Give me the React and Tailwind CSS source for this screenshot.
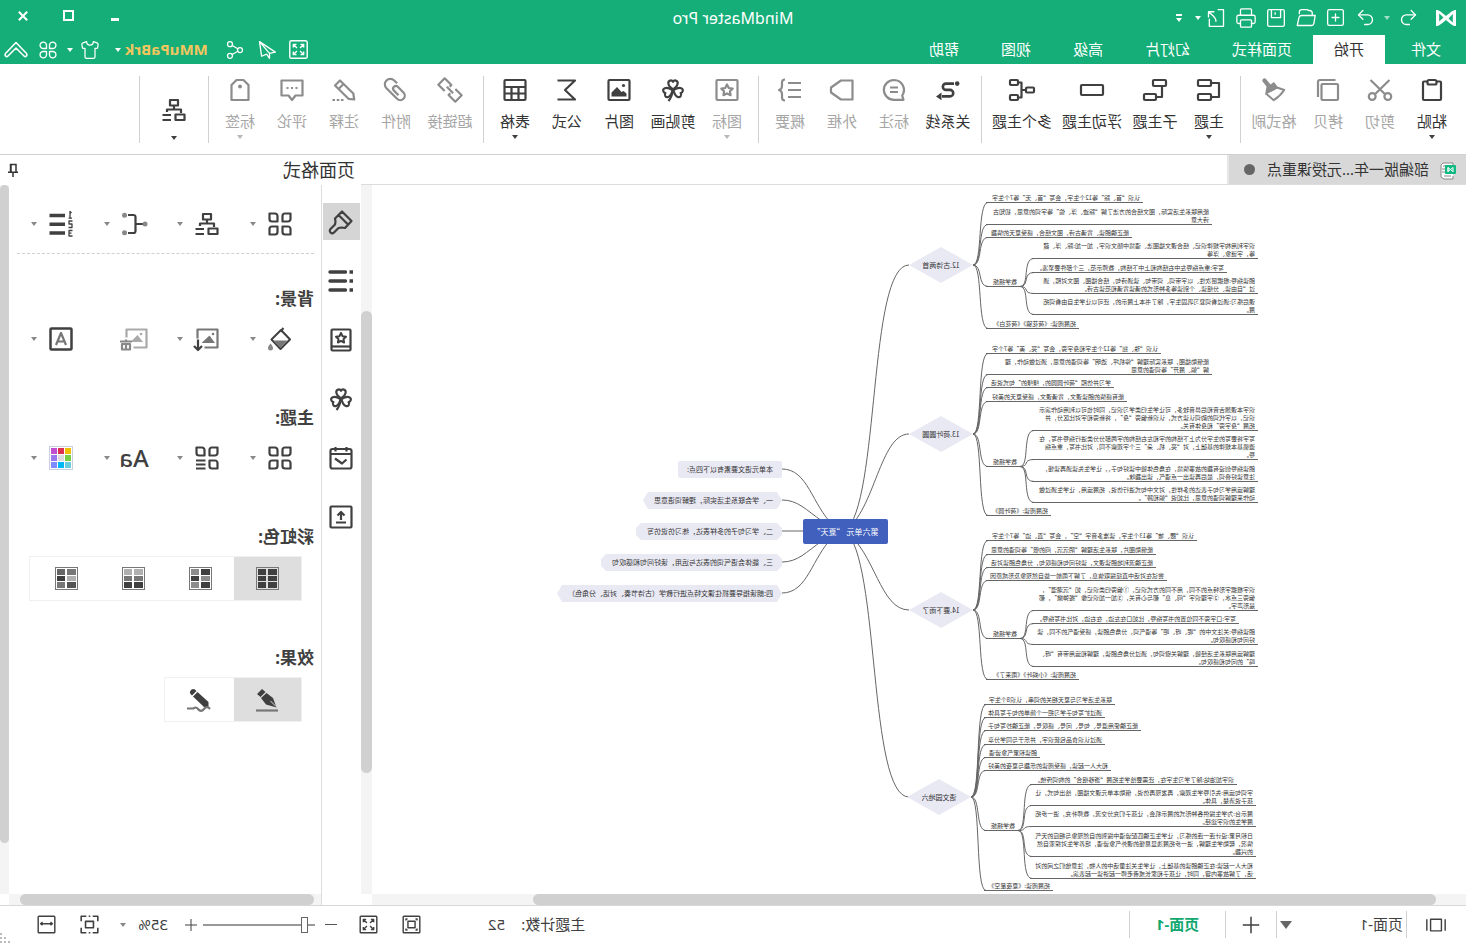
import { Printer, Redo2, Share2, Shirt, SquarePlus, Undo2 } from "lucide-react";

const TOPICS = [
  {
    title: "12.古诗两首",
    x: 493,
    y: 80,
    leaves: [
      { x: 323, y: 17, text: "认识“首、踪”等12个生字，会写“首、无”等7个生字" },
      { x: 254, y: 39, text: "能用联系生活实际，图文结合的方法了解“踪迹、浮、偷”等字词的意思，初知古\n诗大意" },
      { x: 334, y: 52, text: "能正确朗读、背诵古诗，图文结合，感受夏天的情趣" },
      { x: 387, y: 143, text: "拓展阅读:《荷花镇》《荷花白》" },
    ],
    measures: {
      y: 101,
      leaves: [
        { x: 208, y: 73, text: "识字利用构字规律识记、结合课文插图法、语境中随文识字，加一加:踪、浮、藏\n等，字谜象、浮等" },
        { x: 239, y: 87, text: "写字:重点指导左中右结构和上中下结构，教师示范，三个部件要紧凑。" },
        { x: 208, y: 108, text: "朗读指导:根据层次性、以字带词、词带句、读通诗句，结合插图、图文对照，通\n过“自由读、分组读、个别读等多种形式的诵读背诵和范读古诗。" },
        { x: 208, y: 129, text: "课后练习:通过看词复习巩固生字，除了书本上展示的，还可以让学生自由看词拓\n展。" },
      ],
    },
  },
  {
    title: "13.荷叶圆圆",
    x: 493,
    y: 249,
    leaves: [
      { x: 305, y: 168, text: "认识“珠、摇”等12个生字和身字旁，会写“亮、美”等7个字" },
      { x: 254, y: 189, text: "能借助插图，联系实际理解“停机坪、透明”等词语的意思，通过做动作，理\n解“躺、展开”等词语的意思" },
      { x: 352, y: 202, text: "学习并仿照“荷叶圆圆的，绿绿的”句式说话" },
      { x: 339, y: 216, text: "能有感情的朗读课文，背诵课文，感受夏天的美好" },
      { x: 415, y: 330, text: "拓展阅读:《荷叶圆》" },
    ],
    measures: {
      y: 281,
      leaves: [
        { x: 208, y: 245, text: "识字本课翘舌音和后鼻音较多，可让学生归类学习识记，同时也可以利用动作演示\n识记，以字代词的韵词认读方式，认识新偏旁“身”，将新旁和字对比区分，并\n拓展“身字旁”和身体有关。" },
        { x: 208, y: 274, text: "写字将要写的生字分为上下结构的字和左右结构的字两部分分类进行指导书写，在\n遵循基本规律的基础上，对“亮、机、朵”三个字观察不同，对比书写，重点指\n导。" },
        { x: 208, y: 296, text: "朗读指导创设有趣的故事情境，在角色体验中读好句子，，让学生先读通再读懂，\n注意读好叠词，最后再读出一点语气，读出趣味。" },
        { x: 208, y: 317, text: "理解运用学习句子表达的多样性，对文中句式进行仿说，拓展运用，让学生通过做\n动作来理解词语的意思，比如说“躺和蹲”。" },
      ],
    },
  },
  {
    title: "14.要下雨了",
    x: 493,
    y: 425,
    leaves: [
      { x: 269, y: 355, text: "认识“腰、坡”等13个生字，读准多音字“空”，会写“直、边”等7个生字" },
      { x: 310, y: 369, text: "能借助图片，联系生活理解“阴沉沉，闷的很”等词语的意思" },
      { x: 310, y: 382, text: "能正确流利地朗读课文，读好问句和感叹句，分角色朗读对话" },
      { x: 299, y: 395, text: "尝试在对话中直接提取信息，了解下雨前一些自然现象及形成原因" },
      { x: 387, y: 494, text: "拓展阅读:《小蚂叶》《雨来了》" },
    ],
    measures: {
      y: 453,
      leaves: [
        { x: 208, y: 425, text: "识字根据字形特点的不同，用不同的方式识记，①偏旁归类识记，如“沉潮湿”，\n偏旁三点水，②字理识字“闷、息”都与心有关，③加一加识记像“搬弹嫩”，都\n是形声字。" },
        { x: 227, y: 438, text: "写字:口字旁不同位置的书写指导，比如口在左边，在右边，对比书写指导。" },
        { x: 208, y: 459, text: "朗读指导:关注文中的“呢、呀、吧”等语气词，分角色朗读，感受语气的不同，读\n好问句和感叹句。" },
        { x: 208, y: 481, text: "理解运用联系生活经验，理解关键词句，通过分角色朗读，理解和运用带有“呀、\n吗”的问句和感叹句。" },
      ],
    },
  },
  {
    title: "语文园地六",
    x: 495,
    y: 612,
    leaves: [
      { x: 351, y: 519, text: "联系生活学习与夏天相关的词串，认识8个生字" },
      { x: 361, y: 532, text: "通过扩写句子学习把一个简单的句子写具体" },
      { x: 325, y: 545, text: "能正确使用逗号、句号、问号、感叹号，能正确抄写句子" },
      { x: 361, y: 559, text: "通过认识食品包装识字，并乐于与同学分享" },
      { x: 426, y: 572, text: "朗读积累气象谚语" },
      { x: 355, y: 585, text: "和大人一起读，感受阅读的乐趣与夏夜的美好" },
      { x: 413, y: 705, text: "拓展阅读:《夏夜星空》" },
    ],
    measures: {
      y: 645,
      leaves: [
        { x: 229, y: 599, text: "识字加油站:除了学习生字在，还需要给学生拓展“游移组合”的构词传统。" },
        { x: 210, y: 620, text: "字词句运用:先引导学生观察，再发现再仿说，借助本单元课文插图，给出句式，让\n孩子说清楚，具体。" },
        { x: 210, y: 641, text: "展示台:为学生提供各种形式的展示机会，让孩子们充分交流，教师补充，进一步拓\n展学生的识字途径。" },
        { x: 210, y: 671, text: "日积月累:设计连一连的练习，让学生正确匹配谚语中提到的自然现象与相应的天气\n情况，帮助学生理解，进一步拓展浅显易懂的课外气象谚语，培养学生对探索自然\n的兴趣。" },
        { x: 210, y: 693, text: "和大人一起读:在正确朗读的基础上，让学生关注童话中的人物，注意他们之间的对\n话，了解故事内容，同时，让孩子和家长或者老师一起讲读一起表演。" },
      ],
    },
  },
];

const HEXAGON = "pr-[11px] [clip-path:polygon(5px_0,calc(100%-5px)_0,100%_50%,calc(100%-5px)_100%,5px_100%,0_50%)]";
const OCTAGON = "pr-[11px] [clip-path:polygon(5px_0,calc(100%-5px)_0,100%_5px,100%_12px,calc(100%-5px)_100%,5px_100%,0_12px,0_5px)]";

const POINTS = [
  { y: 276, shape: "pr-[9px] rounded-xs", text: "本单元语文要素有以下四点:" },
  { y: 307, shape: HEXAGON, text: "一、学会联系生活实际，理解词语意思" },
  { y: 338, shape: OCTAGON, text: "二、学习句子的多样表达，练习仿说仿写" },
  { y: 369, shape: OCTAGON, text: "三、能体会语气词的表达与运用，读好问句和感叹句" },
  { y: 400, shape: HEXAGON, text: "四:朗读指导要抓住课文特点进行教学（古诗节奏、对话、分角色）" },
];

const TRUNKS = [
  "M621 346C586 320 598 80 557 80",
  "M621 346C591 325 586 249 557 249",
  "M621 346C591 367 586 425 557 425",
  "M621 346C586 372 598 612 557 612",
  "M633 340C654 320 658 284 684 284",
  "M644 336C660 325 668 315 684 315",
  "M621 346H684",
  "M644 356C660 367 668 377 684 377",
  "M633 352C654 372 658 408 684 408",
];

function Icon({ children, className = "size-6", strokeWidth = 2.2 }) {
  return (
    <svg
      viewBox="0 0 24 24"
      className={`shrink-0 overflow-visible ${className}`}
      fill="none"
      stroke="currentColor"
      strokeWidth={strokeWidth}
      strokeLinejoin="round"
      aria-hidden="true"
    >
      {children}
    </svg>
  );
}

const HEART = "M12 11.5C8.5 9 7.3 7 7.3 5A2.5 2.5 0 0 1 12 3.8 2.5 2.5 0 0 1 16.7 5C16.7 7 15.5 9 12 11.5Z";
const STAR = "M12 6.5l1.8 3.5 3.9.6-2.8 2.7.7 3.9-3.6-1.8-3.6 1.8.7-3.9-2.8-2.7 3.9-.6z";

const ICONS = {
  paste: <><rect x="3" y="3.5" width="18" height="18.5" rx="1" /><rect x="7.5" y="2" width="9" height="4.5" rx="1.5" className="fill-white" /></>,
  cut: <><circle cx="4.2" cy="18.5" r="3.4" /><circle cx="19.8" cy="18.5" r="3.4" /><path d="M2.5 2l14.6 14.2M21.5 2L6.9 16.2" /></>,
  copy: <><rect x="2" y="6" width="16.5" height="16" rx="1" /><path d="M4.5 2H20a2 2 0 0 1 2 2v15" /></>,
  brush: <><path d="M12 4l3.5 2.5L20 1a2 2 0 0 1 3 3l-3.5 4.5 1.5 8.5L7.5 10z" fill="currentColor" stroke="none" /><path d="M9 9.500L1.800 12c3 4.500 6 7.500 10.500 10.200l7.200-6.200" strokeWidth="2" /></>,
  topic: <><rect x="10" y="2" width="13" height="6" rx="1" /><rect x="10" y="16" width="13" height="6" rx="1" /><path d="M10 5H2v14h8" /></>,
  subtopic: <><rect x="1" y="2" width="13" height="6" rx="1" /><rect x="11" y="16" width="12" height="6" rx="1" /><path d="M5 8v11h6" /></>,
  floating: <rect x="1" y="7" width="22" height="10" rx="1" />,
  multi: <><rect x="16" y="2" width="8" height="5" rx="1" /><rect x="16" y="17" width="8" height="5" rx="1" /><rect x="0" y="9.500" width="8" height="5" rx="1" /><path d="M16 4.500h-3.500v15H16M8 12h4.500" /></>,
  relation: <><circle cx="2.800" cy="5.600" r="2.300" fill="currentColor" stroke="none" /><path d="M6 5.600h8a3.100 3.100 0 0 1 0 6.300h-4a3.200 3.200 0 0 0 0 6.500h8" strokeWidth="2.600" /><path d="M18.500 14.500l5.500 3.900-5.500 3.800z" fill="currentColor" stroke="none" /></>,
  callout: <><path d="M12 2a10 9.800 0 1 1 0 19.800H2.500l1.300-4.200A10 10 0 0 1 12 2Z" /><path d="M8 9.500h8M8 14h8" /></>,
  boundary: <path d="M1.500 2.500H13L23 9.500v5l-10 7H1.500z" />,
  summary: <><path d="M1 5h13M1 12h13M1 19h13" /><path d="M17 1.500c2.300 0 3 1 3 3V8c0 2.500 1 3.500 3 4-2 .5-3 1.500-3 4v3.500c0 2-.7 3-3 3" /></>,
  mark: <><rect x="1.500" y="2" width="21" height="20" rx="1" /><path d={STAR} /></>,
  clover: <><path d={HEART} /><path d={HEART} transform="rotate(112 12 12)" /><path d={HEART} transform="rotate(-112 12 12)" /><path d="M12 11.500c.5 4.500 2 8.500 4.500 11.500" /></>,
  picture: <><rect x="1.500" y="2" width="21" height="20" rx="1" /><circle cx="7.500" cy="7.500" r="1.600" fill="currentColor" stroke="none" /><path d="M4.500 18.500v-3l3-2.500 2 1 4.500-5 5.500 5.500v4z" fill="currentColor" stroke="none" /></>,
  formula: <path d="M21.500 2.500H4L14 12 4 21.500h17.500" />,
  table: <><rect x="1.500" y="2" width="21" height="20" rx="1" /><path d="M1.500 9h21M1.500 15.500h21M8.500 9v13M15.500 9v13" /></>,
  link: <g transform="rotate(-45 12 12)"><path d="M9 7.500H0v9h9.500V14M15 16.500h9v-9h-9.500V10M7.500 12h9" /></g>,
  clip: <g transform="rotate(45 12 12)"><path d="M6.500 8V4a5.500 5.500 0 0 1 11 0v15a4.500 4.500 0 0 1-9 0V11a2.700 2.700 0 0 1 5.400 0v6.500" /></g>,
  note: <><path d="M1.800 21.500l.9-6L16 2.500l5 5L7.500 20.800zM12.500 6l5 5" /><path d="M12.500 22h2.500M16.700 22h2.500M21 22h2.500" /></>,
  comment: <><path d="M1.500 2.500h21v15h-7L12 22l-3.500-4.500h-7z" /><path d="M6.500 10h2M11 10h2M15.500 10h2" /></>,
  tag: <><path d="M8.500 2h7L20.500 7v15h-17V7z" /><circle cx="12" cy="8.500" r="2" fill="currentColor" stroke="none" /></>,
  tree: <><rect x="8" y="2" width="8" height="5.500" /><path d="M12 7.500V11M5 15v-3.500h14V14M15 17h8.500M15 22h8.500" /><rect x="1.500" y="16.500" width="9" height="5.500" /></>,
  leaves: <path d="M1.500 1.500H7A2.500 2.500 0 0 1 9.500 4v5.500H4A2.500 2.500 0 0 1 1.500 7zM22.500 1.500H17A2.500 2.500 0 0 0 14.500 4v5.500H20A2.500 2.500 0 0 0 22.500 7zM1.500 22.500H7A2.500 2.500 0 0 0 9.500 20v-5.500H4A2.500 2.500 0 0 0 1.500 17zM22.500 22.500H17a2.500 2.500 0 0 1-2.500-2.500v-5.500H20a2.500 2.500 0 0 1 2.500 2.500z" />,
  leafList: <path d="M1.500 1.500H7A2.500 2.500 0 0 1 9.500 4v5.500H4A2.500 2.500 0 0 1 1.500 7zM22.500 1.500H17A2.500 2.500 0 0 0 14.500 4v5.500H20A2.500 2.500 0 0 0 22.500 7zM1.500 22.500H7A2.500 2.500 0 0 0 9.500 20v-5.500H4A2.500 2.500 0 0 0 1.500 17zM13.500 14.500H23M13.500 18.500H23M13.500 22.500H23" />,
  bracket: <><path d="M2 12h8M18 3h-5.500a2 2 0 0 0-2 2v14a2 2 0 0 0 2 2H18" /><g className="fill-[#888]" stroke="none"><circle cx="1" cy="12" r="2.500" /><circle cx="21.500" cy="3.200" r="2.500" /><circle cx="21.500" cy="20.800" r="2.500" /></g></>,
  numbers: <><path d="M8 3.500h15.500M8 12.300h15.500M8 21h15.500" strokeWidth="3.600" /><path d="M1.500 1L3-.5V6M1 6.200h3.500M.5 9h3.500v3H1v3.500h3.500M.5 18.500H4V24H.5M1.500 21.200H4" strokeWidth="1.300" /></>,
  bucket: <><path d="M8.500 1l3 3.500M11 3L2 12.500 11.500 22 20.500 12.500z" strokeWidth="2" /><path d="M4.500 13.500h14.500l-7.500 7.500z" className="fill-[#777]" stroke="none" /><path d="M21.500 16.500c1.500 2 2.500 3.200 2.500 4.500a2.500 2.500 0 0 1-5 0c0-1.300 1-2.500 2.500-4.500z" className="fill-[#888]" stroke="none" /></>,
  insertPicture: <><path d="M14.500 20.500H1.500v-18h20v9" className="stroke-[#777]" /><path d="M4 16l5.500-7.500 8 7.500z" className="fill-[#777]" stroke="none" /><circle cx="6" cy="7" r="1.300" className="fill-[#777]" stroke="none" /><path d="M21 12.500v10.500M17 19l4 4 4-4" /></>,
  removePicture: <><path d="M12.500 20.500H-.5v-18h20v8" /><path d="M3 15l5.500-7 7 7z" fill="currentColor" stroke="none" /><circle cx="5" cy="7" r="1.300" fill="currentColor" stroke="none" /><path d="M14 14.500h12M20 14.500v-2M16 17h8v5.500h-8zM20 17v5" className="stroke-[#888]" /></>,
  watermark: <><rect x="1.500" y="1.500" width="21" height="21" rx="1" strokeWidth="2.500" /><path d="M7 18l5-12 5 12M8.500 14.500h7" className="stroke-[#777]" /></>,
  formatBrush: <path d="M11 1.500L1.500 11l6.500 7 3.500-.5 3 .5 4.500 4.500a2.300 2.300 0 0 0 3.500-3.500L18 14.500l-.5-3 .5-3zM14.500 5L5 14.500" />,
  outline: <><path d="M7.500 3H23M7.500 12H23M7.500 21H23" strokeWidth="3.400" strokeLinecap="round" /><path d="M0 3h3.500M0 12h3.500M0 21h3.500" strokeWidth="3.400" /></>,
  book: <><rect x="2.500" y="1.500" width="19" height="21" rx="1" /><path d="M2.500 18.500h19" /><path d="M12 5l1.500 3.200 3.500.5-2.500 2.400.6 3.400-3.100-1.600-3.100 1.600.6-3.400L7 8.700l3.500-.5z" strokeWidth="2" /></>,
  calendar: <><rect x="1.500" y="3" width="21" height="19.500" rx="2" /><path d="M1.500 8h21M6.500 1v4.500M17.500 1v4.500M6.500 13.500l4.500 4 7-5" /></>,
  upload: <><rect x="1.500" y="1.500" width="21" height="21" rx="1" /><path d="M12 15V7.500M8.500 10.500L12 7l3.500 3.500M7 17.500h10" /></>,
  pen: <><path d="M17 1l5 5-3.500 3-5-5zM12.500 5l5.500 5-5 6.500-10.500 3 3.500-9.500z" fill="currentColor" stroke="none" /><path d="M3 18.500l5.500-5.500" className="stroke-[#dedede]" strokeWidth="1" /><path d="M1 22.500h22" className="stroke-[#777]" /></>,
  pencil: <><path d="M15.500 2a3 3 0 0 1 4.500 4.500l-1 1L14.500 3zM13.500 4L18 8.500 7 19H2.500v-5z" fill="currentColor" stroke="none" /><path d="M1 21c2-2.500 4-2.500 6 0s4 2.500 6 0 3-1.500 5-.5h6" className="stroke-[#777]" /></>,
};

const RIBBON = [
  [
    { icon: "paste", label: "粘贴", caret: true },
    { icon: "cut", label: "剪切", off: true },
    { icon: "copy", label: "拷贝", off: true },
    { icon: "brush", label: "格式刷", off: true },
  ],
  [
    { icon: "topic", label: "主题", caret: true },
    { icon: "subtopic", label: "子主题" },
    { icon: "floating", label: "浮动主题" },
    { icon: "multi", label: "多个主题" },
  ],
  [
    { icon: "relation", label: "关系线" },
    { icon: "callout", label: "标注", off: true },
    { icon: "boundary", label: "外框", off: true },
    { icon: "summary", label: "概要", off: true },
  ],
  [
    { icon: "mark", label: "图标", off: true, caret: true },
    { icon: "clover", label: "剪贴画" },
    { icon: "picture", label: "图片" },
    { icon: "formula", label: "公式" },
    { icon: "table", label: "表格", caret: true },
  ],
  [
    { icon: "link", label: "超链接", off: true },
    { icon: "clip", label: "附件", off: true },
    { icon: "note", label: "注释", off: true },
    { icon: "comment", label: "评论", off: true },
    { icon: "tag", label: "标签", off: true, caret: true },
  ],
];

const ITEM_WIDTHS = { 2: "w-[52px]", 3: "w-[56px]", 4: "w-[70px]" };

function Caret({ className = "" }) {
  return <span className={`inline-block shrink-0 border-x-[3px] border-t-4 border-x-transparent ${className}`} />;
}

function TitleBar() {
  const cell = "flex h-full w-[30px] items-center justify-center";
  return (
    <header className="grid h-[35px] grid-cols-[1fr_auto_1fr] items-center text-white">
      <div className="flex h-full items-center pl-[10px]">
        <svg viewBox="0 0 20 18" className="w-5" fill="#fff" fillRule="evenodd" aria-hidden="true">
          <path d="M0 1c3 0 5 2 10 6C15 3 16.500 1 20 1v16c-3 0-5-2-10-6C5 15 3.500 17 0 17ZM3.200 5v8.500L7.500 9.500zM16.800 4.500L12.500 8.500l4.300 4z" />
        </svg>
        <button aria-label="撤销" className={`${cell} ml-3`}><Undo2 size={21} strokeWidth={1.5} /></button>
        <span className="flex w-[13px] justify-center"><Caret className="opacity-60" /></span>
        <button aria-label="重做" className={cell}><Redo2 size={21} strokeWidth={1.5} /></button>
        <button aria-label="新建" className={cell}><SquarePlus size={21} strokeWidth={1.5} /></button>
        <button aria-label="打开" className={cell}>
          <Icon className="size-5" strokeWidth={1.6}><path d="M4.500 9V6a3 3 0 0 1 3-3H9l1.500-1H17a3 3 0 0 1 3 3v2.500M1 9h16.500a3 3 0 0 1 3 2.500L22.500 21H5.500a3 3 0 0 1-3-2.500z" /></Icon>
        </button>
        <button aria-label="保存" className={cell}>
          <Icon className="size-5" strokeWidth={1.6}><rect x="2" y="2" width="20" height="20" rx="2" /><path d="M6.500 2v9.500h11V2M13 5v3" /></Icon>
        </button>
        <button aria-label="打印" className={cell}><Printer size={22} strokeWidth={1.4} /></button>
        <button aria-label="导出" className={cell}>
          <Icon className="size-5" strokeWidth={1.6}><path d="M10 2H3v20h17v-9M14 4.500h7v7M21 4.500l-4.500 4c-3 2.500-4.500 4-4.500 8" /></Icon>
        </button>
        <Caret />
        <button aria-label="自定义" className="ml-2 flex w-4 flex-col items-center gap-0.5">
          <span className="h-0.5 w-[6px] bg-white" />
          <Caret />
        </button>
      </div>
      <h1 className="text-base font-normal">MindMaster Pro</h1>
      <div className="flex h-full justify-end">
        <button aria-label="最小化" className="flex w-[46px] items-center justify-center">
          <span className="mt-1 h-[3px] w-2 bg-white" />
        </button>
        <button aria-label="最大化" className="flex w-[46px] items-center justify-center pb-1">
          <span className="size-[11px] border-2 border-white" />
        </button>
        <button aria-label="关闭" className="flex w-[46px] items-center justify-center pb-1">
          <Icon className="size-[10px]" strokeWidth={5}><path d="M2 2l20 20M22 2L2 22" /></Icon>
        </button>
      </div>
    </header>
  );
}

function MenuBar() {
  const tab = "h-full px-[21px]";
  const cell = "flex w-8 items-center justify-center";
  return (
    <nav className="flex h-[29px] text-[15px] text-white">
      <button className={`${tab} mr-[5px] ml-1`}>文件</button>
      <button className={`${tab} bg-white text-[#333]`}>开始</button>
      {["页面样式", "幻灯片", "高级", "视图", "帮助"].map((name) => (
        <button key={name} className={tab}>{name}</button>
      ))}
      <div className="ml-auto flex">
        <button aria-label="全屏" className={cell}>
          <Icon className="size-[19px]" strokeWidth={1.8}>
            <rect x="1" y="1" width="22" height="22" rx="2" />
            <path d="M5.500 9.500v-4h4M14.500 5.500h4v4M18.500 14.500v4h-4M9.500 18.500h-4v-4M5.500 5.500l4.500 4.500M18.500 5.500L14 10M18.500 18.500L14 14M5.500 18.500L10 14" />
          </Icon>
        </button>
        <button aria-label="发送" className={cell}>
          <Icon className="size-5" strokeWidth={1.6}><path d="M21 2L2 14.500l7 1.500v6L12.500 17l6 2.500zM21 2L9 16" /></Icon>
        </button>
        <button aria-label="分享" className={`${cell} mr-[11px]`}><Share2 size={20} strokeWidth={1.5} /></button>
        <button className="mr-[11px] flex items-center gap-1 font-['Open_Sans'] font-bold text-[#f4c65f]">
          MMuPaBrk
          <Caret className="text-white" />
        </button>
        <button aria-label="皮肤" className="flex w-[28px] items-center justify-center"><Shirt size={20} strokeWidth={1.5} /></button>
        <span className="flex w-3 items-center justify-center"><Caret /></span>
        <button aria-label="应用" className={cell}>
          <Icon className="size-[18px]" strokeWidth={1.8}>
            <path d="M10 10H6a4.300 4.300 0 1 1 4-4zM14 10h4a4.300 4.300 0 1 0-4-4zM10 14H6a4.300 4.300 0 1 0 4 4zM14 14h4a4.300 4.300 0 1 1-4 4z" />
          </Icon>
        </button>
        <button aria-label="收起" className={cell}>
          <Icon strokeWidth={1.6}><path d="M12 4.500L1.500 15.500c-1.500 2 1 4 2.500 2.500l8-8 8 8c1.500 1.500 4-.5 2.500-2.500z" /></Icon>
        </button>
      </div>
    </nav>
  );
}

function Separator() {
  return <span className="mt-3 h-[67px] w-px shrink-0 bg-[#d0d0d0]" />;
}

function RibbonItem({ icon, label, off, caret }) {
  return (
    <button
      disabled={off}
      className={`flex h-full flex-col items-center pt-[14px] ${ITEM_WIDTHS[label.length]} ${off ? "text-[#8c8c8c]" : "text-[#404040]"}`}
    >
      <Icon>{ICONS[icon]}</Icon>
      <span className={`mt-[9px] text-[15px] leading-5 whitespace-nowrap ${off ? "text-[#a6a6a6]" : "text-[#333]"}`}>{label}</span>
      {caret && <Caret className={off ? "mt-1 text-[#b8b8b8]" : "mt-1"} />}
    </button>
  );
}

function Ribbon() {
  return (
    <div className="flex h-[91px] border-b border-[#d0d0d0] bg-white pl-[3px]">
      {RIBBON.map((group, index) => (
        <div key={index} className="flex">
          <div className="flex px-[5px]">
            {group.map((item) => <RibbonItem key={item.label} {...item} />)}
          </div>
          <Separator />
        </div>
      ))}
      <button aria-label="布局" className="flex w-[68px] flex-col items-center pt-[34px] text-[#404040]">
        <Icon>{ICONS.tree}</Icon>
        <Caret className="mt-[14px]" />
      </button>
      <Separator />
    </div>
  );
}

function Leaf({ x, y, text, right }) {
  const lines = text.split("\n").length;
  return (
    <p
      className="absolute border-b border-[#666] pl-[3px] text-[6px] leading-[8px] whitespace-pre text-[#333]"
      style={{ left: x, top: y - lines * 8, width: right - x }}
    >
      {text}
    </p>
  );
}

function MindMap() {
  return (
    <div className="relative min-w-0 flex-1 overflow-hidden bg-white font-['Noto_Sans_CJK_SC',sans-serif]">
      <svg className="absolute top-0 left-0 h-[709px] w-[1094px]" viewBox="0 0 1094 709" fill="none" stroke="#666" aria-hidden="true">
        {TRUNKS.map((d) => <path key={d} d={d} />)}
        {TOPICS.map(({ title, x, y, leaves, measures }) => (
          <g key={title}>
            {[...leaves, measures].map((leaf) => (
              <path key={leaf.y} d={`M${x} ${y}C${x - 10} ${y} ${x - 4} ${leaf.y + 0.5} ${x - 15} ${leaf.y + 0.5}`} />
            ))}
            {measures.leaves.map((leaf) => (
              <path
                key={leaf.y}
                d={`M${x - 47} ${measures.y + 0.5}C${x - 57} ${measures.y + 0.5} ${x - 49} ${leaf.y + 0.5} ${x - 61} ${leaf.y + 0.5}`}
              />
            ))}
          </g>
        ))}
      </svg>

      {TOPICS.map(({ title, x, y, leaves, measures }) => (
        <div key={title}>
          <div
            className="absolute flex h-9 w-16 items-center justify-center bg-[#e9e9f3] text-[7px] whitespace-nowrap text-[#333] [clip-path:polygon(50%_0,100%_50%,50%_100%,0_50%)]"
            style={{ left: x, top: y - 18 }}
          >
            {title}
          </div>
          {leaves.map((leaf) => <Leaf key={leaf.y} {...leaf} right={x - 13} />)}
          <Leaf x={x - 47} y={measures.y} text="教学措施" right={x - 13} />
          {measures.leaves.map((leaf) => <Leaf key={leaf.y} {...leaf} right={x - 59} />)}
        </div>
      ))}

      {POINTS.map(({ y, shape, text }) => (
        <div
          key={text}
          className={`absolute left-[684px] flex h-[17px] items-center bg-[#e9e9f3] pl-[9px] text-[7px] whitespace-nowrap text-[#333] ${shape}`}
          style={{ top: y }}
        >
          {text}
        </div>
      ))}

      <div className="absolute top-[334px] left-[578px] flex h-[25px] w-[85px] items-center justify-center rounded-xs bg-[#415fbd] text-[8px] whitespace-pre text-white">
        第六单元 “夏天”
      </div>
    </div>
  );
}

function Workspace() {
  return (
    <main className="flex min-w-0 flex-1 flex-col">
      <div className="flex h-[30px] border-b border-[#dcdcdc]">
        <button className="flex w-[239px] items-center border-r-2 border-[#e6e6e6] bg-[#d8d8d8] pl-2 text-[15px] text-[#333]">
          <svg viewBox="0 0 20 20" className="size-5" fill="none" stroke="#888" aria-hidden="true">
            <path d="M5 5V3h10l2 2v12l-3 2H5v-3" fill="#fff" />
            <path d="M7 6h8M10 9h6M10 12h6M7 16h7" />
            <rect x="2" y="5" width="11" height="9" rx="1" fill="#10b982" stroke="none" />
            <path d="M5 12V7.500l5 4V7.500l-5 4M10 7.500V12" stroke="#fff" />
          </svg>
          <span className="ml-[9px]">部编版一年...元授课重点</span>
          <span className="ml-3 size-[11px] rounded-full bg-[#666]" />
        </button>
      </div>
      <div className="flex min-h-0 flex-1">
        <MindMap />
        <div className="w-[11px] bg-[#f4f4f4] pt-[126px]">
          <div className="h-[462px] rounded-full bg-[#d0d0d0]" />
        </div>
      </div>
      <div className="mr-[11px] h-[11px] bg-[#f4f4f4] pr-[161px] pl-[30px]">
        <div className="h-full rounded-full bg-[#d0d0d0]" />
      </div>
    </main>
  );
}

function PanelRow({ children }) {
  return <div className="flex h-12 items-center pl-[22px] text-[#404040]">{children}</div>;
}

function PanelButton({ label, icon, children, off }) {
  return (
    <button aria-label={label} disabled={off} className={`flex w-[73px] shrink-0 items-center gap-3 last:w-auto ${off ? "text-[#aaa]" : ""}`}>
      {children ?? <Icon>{ICONS[icon]}</Icon>}
      {!off && <Caret className="text-[#888]" />}
    </button>
  );
}

function PanelHeading({ children, className }) {
  return <h3 className={`h-6 text-[17px] leading-6 font-bold text-[#404040] ${className}`}>{children}</h3>;
}

const SWATCHES = ["#efc000", "#dc2f52", "#c04fd0", "#77cf45", "#dcdcdc", "#9a77ee", "#6bccdc", "#00b7f5", "#7d8cff"];

const RAINBOWS = [
  ["#404040", "#404040", "#404040", "#404040", "#404040", "#404040"],
  ["#404040", "#8c8c8c", "#8c8c8c", "#404040", "#404040", "#8c8c8c"],
  ["#b0b0b0", "#b0b0b0", "#777", "#777", "#404040", "#404040"],
  ["#777", "#666", "#b0b0b0", "#404040", "#555", "#777"],
];

function FormatPanel() {
  const tabs = ["formatBrush", "outline", "book", "clover", "calendar", "upload"];
  return (
    <aside className="flex w-[361px] flex-col">
      <div className="flex h-[30px] items-center justify-between pr-[7px] pl-[6px]">
        <h2 className="text-[18px] text-[#333]">页面格式</h2>
        <button aria-label="固定" className="text-[#333]">
          <svg viewBox="0 0 12 14" className="h-[14px] w-3" fill="none" stroke="currentColor" strokeWidth="1.5" aria-hidden="true">
            <path d="M3 9V1.500h5.500V9M1 9.200h10M6 9v5M8 1.500V9" />
          </svg>
        </button>
      </div>
      <div className="flex min-h-0 flex-1">
        <div className="w-10 border-r border-[#dcdcdc] pt-[18px]">
          {tabs.map((name, index) => (
            <button
              key={name}
              aria-label={name}
              className={`mb-[22px] ml-px flex h-[37px] w-[37px] items-center justify-center text-[#404040] ${index === 0 ? "bg-[#d5d5d5]" : ""}`}
            >
              <Icon>{ICONS[name]}</Icon>
            </button>
          ))}
        </div>
        <div className="flex min-w-0 flex-1 flex-col">
          <div className="flex-1 overflow-hidden pt-[15px] pl-[7px]">
            <PanelRow>
              <PanelButton label="布局" icon="leaves" />
              <PanelButton label="结构" icon="tree" />
              <PanelButton label="连线" icon="bracket" />
              <PanelButton label="编号" icon="numbers" />
            </PanelRow>
            <hr className="mt-[5px] mr-2 border-t border-dashed border-[#d0d0d0]" />
            <PanelHeading className="mt-[33px]">背景:</PanelHeading>
            <div className="mt-1">
              <PanelRow>
                <PanelButton label="背景颜色" icon="bucket" />
                <PanelButton label="背景图片" icon="insertPicture" />
                <PanelButton label="移除图片" icon="removePicture" off />
                <PanelButton label="水印" icon="watermark" />
              </PanelRow>
            </div>
            <PanelHeading className="mt-[43px]">主题:</PanelHeading>
            <div className="mt-1">
              <PanelRow>
                <PanelButton label="主题风格" icon="leaves" />
                <PanelButton label="主题布局" icon="leafList" />
                <PanelButton label="字体">
                  <span className="flex w-6 justify-center text-[24px] leading-6 font-medium">Aa</span>
                </PanelButton>
                <PanelButton label="颜色">
                  <span className="grid size-6 shrink-0 grid-cols-3 gap-px border border-[#c8cfe0] p-px">
                    {SWATCHES.map((color) => <i key={color} style={{ background: color }} />)}
                  </span>
                </PanelButton>
              </PanelRow>
            </div>
            <PanelHeading className="mt-[43px]">彩虹色:</PanelHeading>
            <div className="mt-[7px] ml-3 inline-flex h-[45px] border border-[#f0f0f0] pr-[3px] align-top">
              {RAINBOWS.map((colors, index) => (
                <button
                  key={index}
                  aria-label={`彩虹色 ${index + 1}`}
                  aria-pressed={index === 0}
                  className={`flex w-[67px] items-center justify-center ${index === 0 ? "bg-[#dedede]" : ""}`}
                >
                  <span className="grid size-[23px] grid-cols-2 gap-x-0.5 gap-y-px border border-[#777] p-px">
                    {colors.map((color, i) => <i key={i} style={{ background: color }} />)}
                  </span>
                </button>
              ))}
            </div>
            <PanelHeading className="mt-[45px]">效果:</PanelHeading>
            <div className="mt-[7px] ml-3 inline-flex h-[45px] border border-[#f0f0f0] align-top">
              <button aria-label="普通" aria-pressed="true" className="flex w-[67px] items-center justify-center bg-[#dedede] text-[#404040]">
                <Icon>{ICONS.pen}</Icon>
              </button>
              <button aria-label="手绘" aria-pressed="false" className="flex w-[69px] items-center justify-center text-[#404040]">
                <Icon>{ICONS.pencil}</Icon>
              </button>
            </div>
          </div>
          <div className="h-[11px] bg-[#f4f4f4] pr-[11px] pl-[7px]">
            <div className="h-full rounded-full bg-[#d0d0d0]" />
          </div>
        </div>
        <div className="mb-[11px] w-[9px] bg-[#f4f4f4]">
          <div className="h-[658px] rounded-full bg-[#d0d0d0]" />
        </div>
      </div>
    </aside>
  );
}

function StatusBar() {
  const cell = "flex w-[43px] items-center justify-center";
  const line = "my-[5px] w-px bg-[#d0d0d0]";
  return (
    <footer className="flex h-[38px] border-t border-[#d8d8d8] text-[15px] text-[#404040]">
      <button aria-label="页面列表" className="flex w-[59px] items-center justify-center">
        <Icon className="size-5" strokeWidth={1.7}><path d="M1 5v14M23 5v14" /><rect x="5.500" y="5" width="13" height="14" /></Icon>
      </button>
      <span className={line} />
      <label className="relative flex w-[129px] items-center">
        <select aria-label="页面" defaultValue="1" className="h-full w-full appearance-none bg-transparent pl-[3px] outline-none">
          <option value="1">页面-1</option>
        </select>
        <span className="pointer-events-none absolute right-[3px] border-x-[6px] border-t-8 border-x-transparent text-[#666]" />
      </label>
      <span className={line} />
      <button aria-label="新建页面" className="flex w-[50px] items-center justify-center">
        <Icon className="size-[18px]" strokeWidth={2}><path d="M12 1v22M1 12h22" /></Icon>
      </button>
      <span className={line} />
      <button className="w-[95px] font-bold text-[#12a870]">页面-1</button>
      <span className={line} />

      <p className="mr-[55px] ml-auto flex items-center gap-4 whitespace-nowrap">
        主题计数:<span>52</span>
      </p>
      <button aria-label="适合页面" className={cell}>
        <Icon className="size-[19px]" strokeWidth={1.8}><rect x="1.500" y="1.500" width="21" height="21" rx="1" /><rect x="7.500" y="8" width="9" height="8" /><path d="M5 7V5h2M17 5h2v2M19 17v2h-2M7 19H5v-2" /></Icon>
      </button>
      <button aria-label="全屏显示" className={cell}>
        <Icon className="size-[19px]" strokeWidth={1.8}><rect x="1.500" y="1.500" width="21" height="21" rx="1" /><path d="M5.500 9V5.500H9M15 5.500h3.500V9M18.500 15v3.500H15M9 18.500H5.500V15M5.500 5.500L10 10M18.500 5.500L14 10M18.500 18.500L14 14M5.500 18.500L10 14" /></Icon>
      </button>
      <button aria-label="缩小" className="flex w-8 items-center justify-center"><span className="h-px w-3 bg-[#555]" /></button>
      <input
        type="range"
        aria-label="缩放"
        min="0"
        max="100"
        defaultValue="7"
        className="my-auto h-4 w-[112px] appearance-none bg-transparent bg-[linear-gradient(#999,#999)] bg-[length:100%_2px] bg-center bg-no-repeat [&::-webkit-slider-thumb]:h-4 [&::-webkit-slider-thumb]:w-[7px] [&::-webkit-slider-thumb]:appearance-none [&::-webkit-slider-thumb]:border [&::-webkit-slider-thumb]:border-[#666] [&::-webkit-slider-thumb]:bg-white"
      />
      <button aria-label="放大" className="flex w-6 items-center justify-center">
        <Icon className="size-3" strokeWidth={2}><path d="M12 0v24M0 12h24" /></Icon>
      </button>
      <button className="flex w-[68px] items-center justify-between pr-[9px] pl-[11px]">
        35%
        <Caret className="text-[#888]" />
      </button>
      <button aria-label="聚焦" className={cell}>
        <Icon className="size-[19px]" strokeWidth={2}><path d="M1.500 8V1.500H8M16 1.500h6.500V8M22.500 16v6.500H16M8 22.500H1.500V16M11 1.500h2M11 22.500h2" /><rect x="7" y="8" width="10" height="8" /></Icon>
      </button>
      <button aria-label="适合宽度" className={cell}>
        <Icon className="size-[19px]" strokeWidth={1.8}><rect x="1.500" y="1.500" width="21" height="21" rx="1" /><path d="M4.500 11h15M7 9l-2.500 2L7 13M17 9l2.500 2-2.500 2" /></Icon>
      </button>
      <svg viewBox="0 0 25 12" className="mt-auto h-3 w-[25px]" fill="#bbb" aria-hidden="true">
        <path d="M23 2h2v2h-2zM19 6h2v2h-2zM23 6h2v2h-2zM15 10h2v2h-2zM19 10h2v2h-2zM23 10h2v2h-2z" />
      </svg>
    </footer>
  );
}

export default function App() {
  return (
    <div lang="zh-CN" className="flex h-screen -scale-x-100 flex-col overflow-hidden bg-white font-['Noto_Sans','Noto_Sans_CJK_SC',sans-serif]">
      <div className="bg-[#15ae78]">
        <TitleBar />
        <MenuBar />
      </div>
      <Ribbon />
      <div className="flex min-h-0 flex-1">
        <Workspace />
        <FormatPanel />
      </div>
      <StatusBar />
    </div>
  );
}
